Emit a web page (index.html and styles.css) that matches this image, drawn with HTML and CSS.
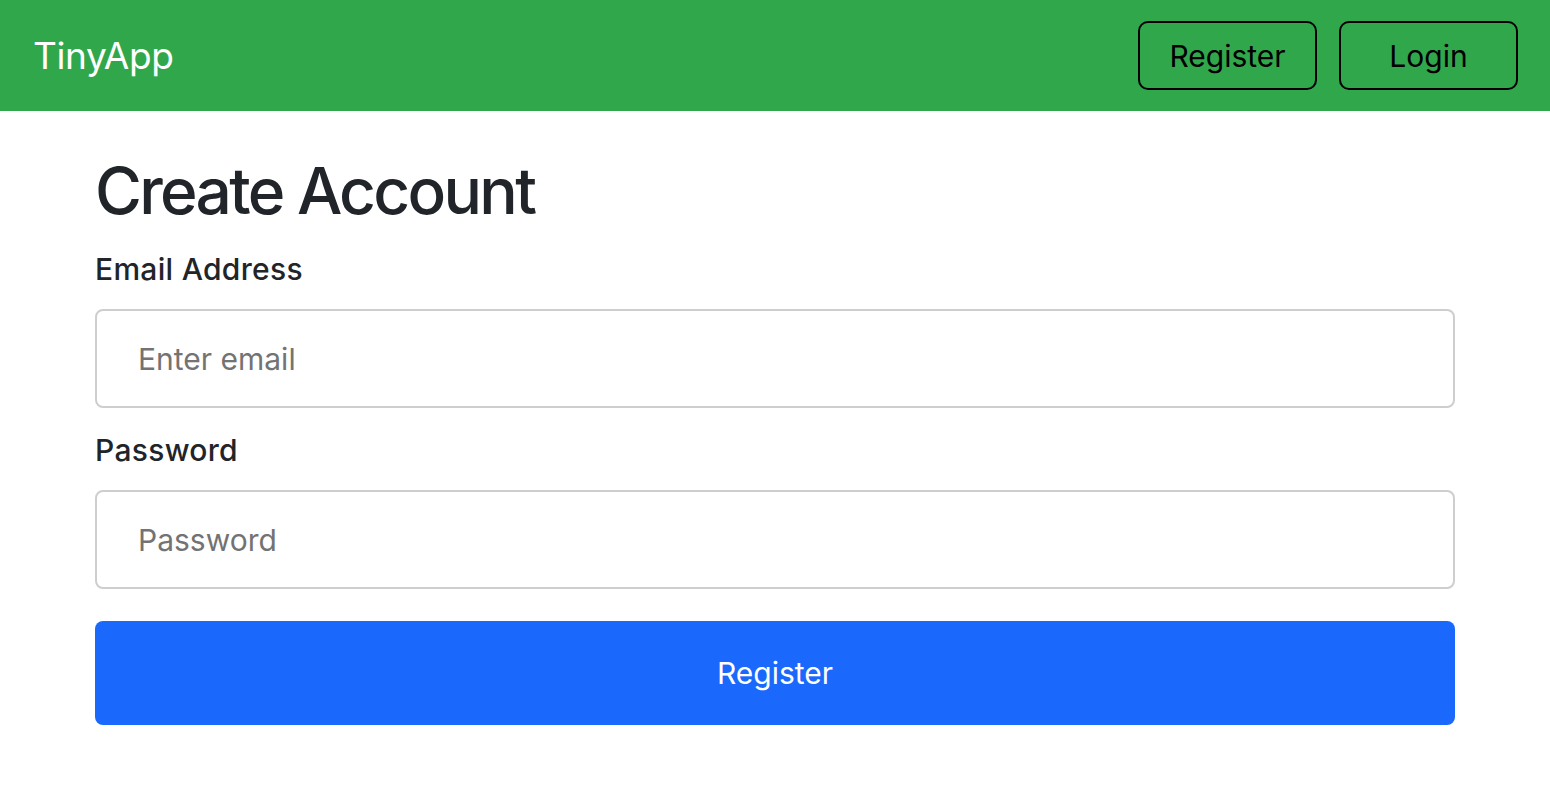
FILE: index.html
```html
<!DOCTYPE html>
<html lang="en">
<head>
<meta charset="utf-8">
<title>TinyApp - Create Account</title>
<link rel="stylesheet" href="styles.css">
</head>
<body>
  <nav class="navbar">
    <a class="brand" href="#">TinyApp</a>
    <div class="nav-actions">
      <a class="nav-btn" href="#">Register</a>
      <a class="nav-btn" href="#">Login</a>
    </div>
  </nav>
  <main class="container">
    <h1 class="title">Create Account</h1>
    <form class="form">
      <div class="group">
        <label class="label" for="email">Email Address</label>
        <input class="input" id="email" type="email" placeholder="Enter email">
      </div>
      <div class="group">
        <label class="label" for="password">Password</label>
        <input class="input" id="password" type="password" placeholder="Password">
      </div>
      <button class="submit" type="submit">Register</button>
    </form>
  </main>
</body>
</html>
```
FILE: styles.css
```css
* { box-sizing: border-box; }
html, body {
  margin: 0;
  padding: 0;
  background: #ffffff;
  font-family: Inter, "Noto Sans", "Liberation Sans", sans-serif;
  color: #212529;
}
.navbar {
  height: 111px;
  background: #31a74c;
  display: flex;
  align-items: center;
  justify-content: space-between;
  padding: 0 32px 0 33px;
}
.brand {
  color: #ffffff;
  text-decoration: none;
  font-size: 37px;
  line-height: 1;
  letter-spacing: -0.4px;
}
.nav-actions {
  display: flex;
  gap: 22px;
}
.nav-btn {
  width: 179px;
  height: 69px;
  border: 2px solid #000000;
  border-radius: 10px;
  color: #000000;
  text-decoration: none;
  font-size: 30px;
  display: flex;
  align-items: center;
  justify-content: center;
}
.container {
  padding: 41px 0 0 95px;
  width: 1455px;
}
.title {
  margin: 0 0 18px 0;
  font-size: 64px;
  font-weight: 500;
  line-height: 77px;
  letter-spacing: -2.7px;
}
.group {
  margin-bottom: 20px;
}
.label {
  display: block;
  font-size: 30px;
  font-weight: 500;
  line-height: 45px;
  letter-spacing: 0.3px;
  margin-bottom: 17px;
}
.input {
  display: block;
  width: 100%;
  height: 99px;
  border: 2px solid #cecece;
  border-radius: 8px;
  padding: 0 41px;
  font-family: inherit;
  font-size: 30px;
  color: #212529;
  background: #ffffff;
  outline: none;
}
.input::placeholder {
  color: #737373;
}
.submit {
  display: block;
  width: 100%;
  height: 104px;
  margin-top: 32px;
  border: none;
  border-radius: 8px;
  background: #1a68fc;
  color: #ffffff;
  font-family: inherit;
  font-size: 30px;
  cursor: pointer;
}
```
